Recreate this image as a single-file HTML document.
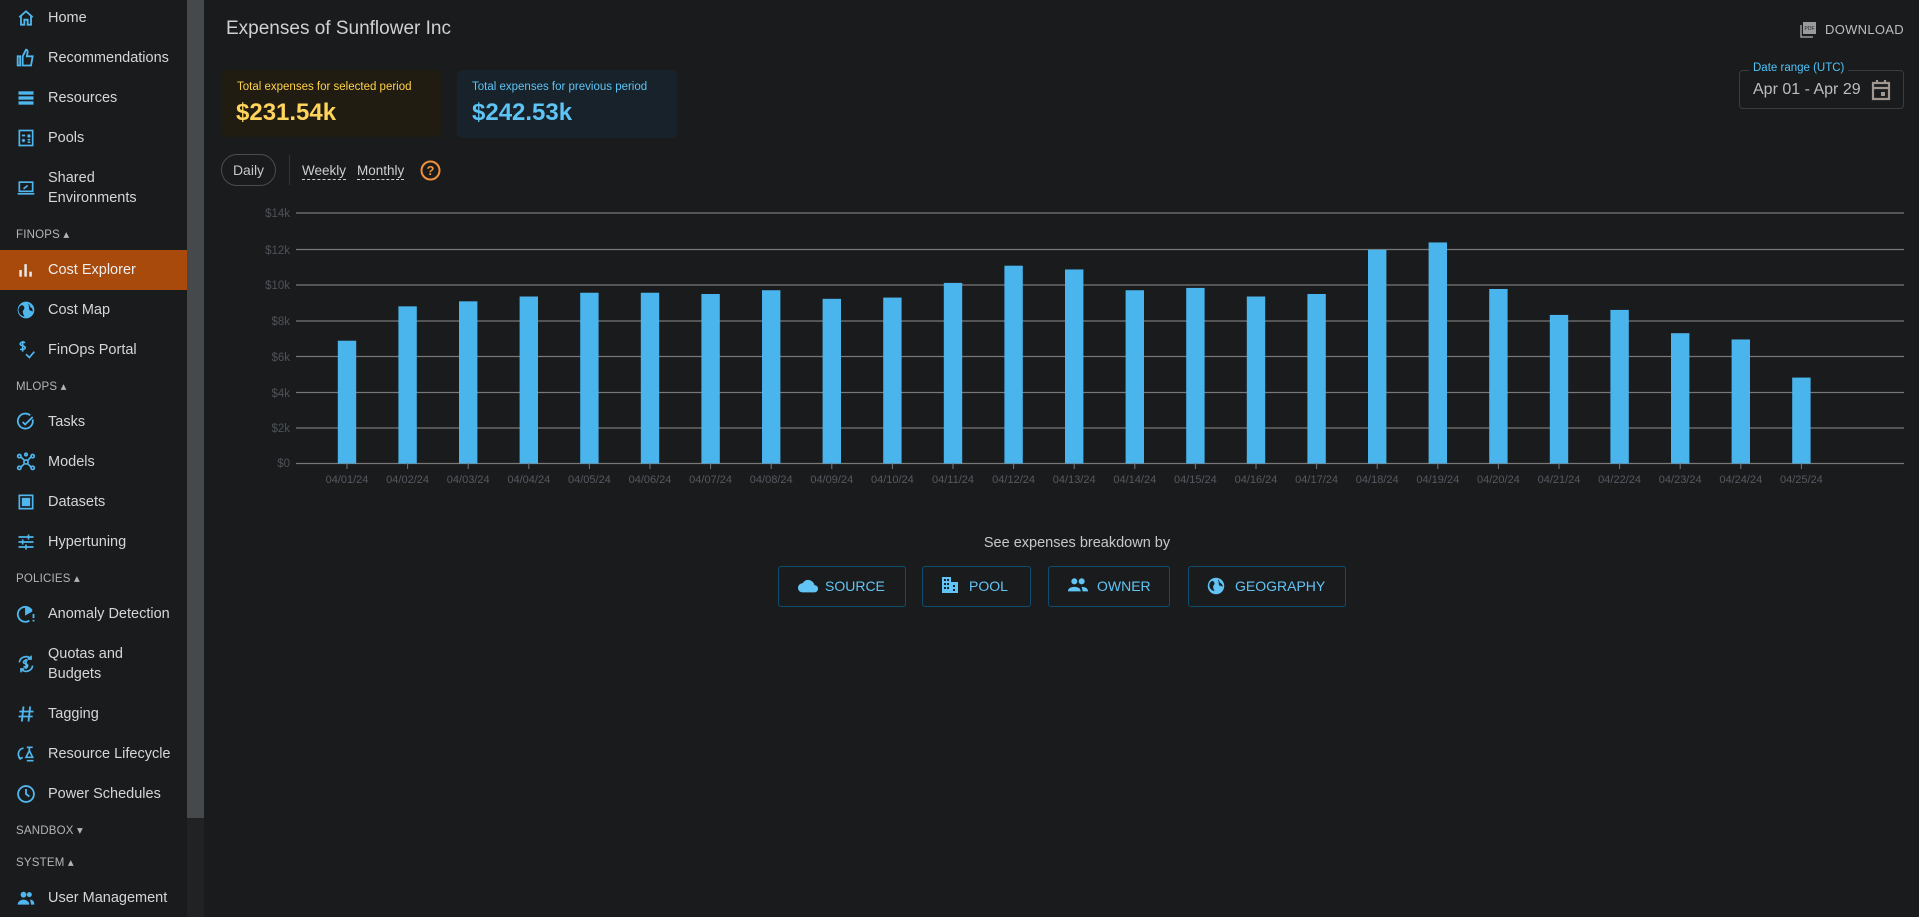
<!DOCTYPE html>
<html><head><meta charset="utf-8">
<style>
*{box-sizing:border-box;margin:0;padding:0}
body{width:1919px;height:917px;background:#1a1b1d;font-family:"Liberation Sans","DejaVu Sans",sans-serif;color:#d4d4d4;position:relative;overflow:hidden}
.sb{position:absolute;left:0;top:0;width:187px;height:917px;background:#1a1b1d}
.scr{position:absolute;left:187px;top:0;width:17px;height:818px;background:#45494c}
.scr2{position:absolute;left:187px;top:818px;width:17px;height:99px;background:#202224}
.it{position:absolute;left:0;width:187px;font-size:14.5px;color:#d6d6d6;line-height:20px}
.it svg{position:absolute;left:16px;width:20px;height:20px}
.it span{position:absolute;left:48px}
.sec{position:absolute;left:16px;font-size:11.5px;color:#b5b5b5;letter-spacing:.2px}
.abs{position:absolute}
</style></head><body>
<div class="sb">
<div class="it" style="top:8px"><svg viewBox="0 0 24 24" style="top:0" fill="none" stroke="#4fb6ee" stroke-width="2.2"><path d="M4 11L12 4l8 7M6 10v10h4v-6h4v6h4V10"/></svg><span>Home</span></div>
<div class="it" style="top:48px"><svg viewBox="0 0 24 24" style="top:0" fill="none" stroke="#4fb6ee" stroke-width="2.2"><path d="M2 10h3v11H2zM8 10l4-8c2 0 2 2 2 3l-1 5h7l-2 11H8z"/></svg><span>Recommendations</span></div>
<div class="it" style="top:88px"><svg viewBox="0 0 24 24" style="top:0" fill="#4fb6ee"><rect x="3" y="4" width="18" height="4"/><rect x="3" y="10" width="18" height="4"/><rect x="3" y="16" width="18" height="4"/></svg><span>Resources</span></div>
<div class="it" style="top:128px"><svg viewBox="0 0 24 24" style="top:0" fill="none" stroke="#4fb6ee" stroke-width="2"><rect x="4" y="3" width="16" height="18"/><path d="M7 9h4M9 13v4M7 15h4M14 8l3 3M17 8l-3 3M14 14h3M14 17h3"/></svg><span>Pools</span></div>
<div class="it" style="top:168px"><svg viewBox="0 0 24 24" style="top:10px" fill="none" stroke="#4fb6ee" stroke-width="2"><rect x="4" y="5" width="16" height="11"/><path d="M2 19h20M9 13l5-4"/></svg><span>Shared<br>Environments</span></div>
<div class="sec" style="top:227px">FINOPS ▴</div>
<div class="abs" style="left:0;top:250px;width:187px;height:40px;background:#a84a0c"></div>
<div class="it" style="top:260px"><svg viewBox="0 0 24 24" style="top:0" fill="#e8e8e8"><rect x="4" y="12" width="3" height="8"/><rect x="10" y="5" width="3" height="15"/><rect x="16" y="14" width="3" height="6"/></svg><span style="color:#eee">Cost Explorer</span></div>
<div class="it" style="top:300px"><svg viewBox="0 0 24 24" style="top:0" fill="#4fb6ee"><circle cx="12" cy="12" r="10"/><path d="M7 6c3 1 4 4 2 6s0 5 1 8c-4-1-7-4-7-8 0-3 2-5 4-6zM15 4c2 2 1 4 3 5s2 3 2 5l-4-2z" fill="#1a1b1d"/></svg><span>Cost Map</span></div>
<div class="it" style="top:340px"><svg viewBox="0 0 24 24" style="top:0" fill="none" stroke="#4fb6ee" stroke-width="2"><path d="M11 3c-3-1-6 0-6 2s6 2 6 4-3 3-6 2M8 1v13M12 17l4 4 6-7"/></svg><span>FinOps Portal</span></div>
<div class="sec" style="top:379px">MLOPS ▴</div>
<div class="it" style="top:412px"><svg viewBox="0 0 24 24" style="top:0" fill="none" stroke="#4fb6ee" stroke-width="2.2"><path d="M20 9a9 9 0 1 1-3-5"/><path d="M8 12l3 3 9-9"/></svg><span>Tasks</span></div>
<div class="it" style="top:452px"><svg viewBox="0 0 24 24" style="top:0" fill="none" stroke="#4fb6ee" stroke-width="2"><circle cx="12" cy="12" r="2.5"/><circle cx="4" cy="5" r="2"/><circle cx="20" cy="5" r="2"/><circle cx="4" cy="19" r="2"/><circle cx="20" cy="19" r="2"/><circle cx="12" cy="3" r="1.5"/><path d="M6 6l4 4M18 6l-4 4M6 18l4-4M18 18l-4-4"/></svg><span>Models</span></div>
<div class="it" style="top:492px"><svg viewBox="0 0 24 24" style="top:0" fill="none" stroke="#4fb6ee" stroke-width="2"><rect x="4" y="4" width="16" height="16"/><rect x="8" y="8" width="3" height="3" fill="#4fb6ee"/><rect x="13" y="8" width="3" height="3" fill="#4fb6ee"/><rect x="8" y="13" width="3" height="3" fill="#4fb6ee"/><rect x="13" y="13" width="3" height="3" fill="#4fb6ee"/></svg><span>Datasets</span></div>
<div class="it" style="top:532px"><svg viewBox="0 0 24 24" style="top:0" fill="none" stroke="#4fb6ee" stroke-width="2"><path d="M3 6h18M3 12h18M3 18h18M15 3v6M8 9v6M12 15v6"/></svg><span>Hypertuning</span></div>
<div class="sec" style="top:571px">POLICIES ▴</div>
<div class="it" style="top:604px"><svg viewBox="0 0 24 24" style="top:0" fill="none" stroke="#4fb6ee" stroke-width="2.2"><path d="M16 20a9 9 0 1 1 3-12"/><path d="M12 3v9l7-4" fill="#4fb6ee"/><path d="M21 12v5M21 19v2"/></svg><span>Anomaly Detection</span></div>
<div class="it" style="top:644px"><svg viewBox="0 0 24 24" style="top:10px" fill="none" stroke="#4fb6ee" stroke-width="2"><path d="M4 10a8 8 0 0 1 14-4M20 14a8 8 0 0 1-14 4M18 2v4h-4M6 22v-4h4M14 8c-2-1-5 0-5 2s5 1 5 4-3 2-5 1M12 6v12"/></svg><span>Quotas and<br>Budgets</span></div>
<div class="it" style="top:704px"><svg viewBox="0 0 24 24" style="top:0" fill="none" stroke="#4fb6ee" stroke-width="2.2"><path d="M9 3L7 21M17 3l-2 18M4 9h17M3 15h17"/></svg><span>Tagging</span></div>
<div class="it" style="top:744px"><svg viewBox="0 0 24 24" style="top:0" fill="none" stroke="#4fb6ee" stroke-width="2"><path d="M9 5a7 7 0 0 0-4 12M3 15l2 3 3-2M13 4h7M16 4v4l-4 8h8l-4-8M13 20h8"/></svg><span>Resource Lifecycle</span></div>
<div class="it" style="top:784px"><svg viewBox="0 0 24 24" style="top:0" fill="none" stroke="#4fb6ee" stroke-width="2.2"><circle cx="12" cy="12" r="9.5"/><path d="M12 6v6l4 3"/></svg><span>Power Schedules</span></div>
<div class="sec" style="top:823px">SANDBOX ▾</div>
<div class="sec" style="top:855px">SYSTEM ▴</div>
<div class="it" style="top:888px"><svg viewBox="0 0 24 24" style="top:0" fill="#4fb6ee"><circle cx="9" cy="8" r="3.5"/><circle cx="16" cy="8" r="3"/><path d="M2 20c0-4 4-6 7-6s7 2 7 6zM17 14c3 0 5 2 5 6h-4c0-2-1-4-1-6z"/></svg><span>User Management</span></div>
</div>
<div class="scr"></div><div class="scr2"></div>

<div class="abs" style="left:226px;top:18px;font-size:19px;color:#d0d0d0">Expenses of Sunflower Inc</div>
<div class="abs" style="left:1800px;top:22px"><svg width="16" height="16" viewBox="0 0 16 16"><rect x="3" y="0" width="13" height="12" fill="#9a9a9a"/><path d="M1 3v12h12" stroke="#9a9a9a" stroke-width="1.5" fill="none"/><text x="4.5" y="8" font-size="5" fill="#222" font-family="Liberation Sans">PDF</text></svg></div>
<div class="abs" style="left:1825px;top:22px;font-size:13px;color:#bdbdbd;letter-spacing:.3px">DOWNLOAD</div>

<div class="abs" style="left:222px;top:70px;width:219px;height:67px;background:#211c12;border-radius:4px"></div>
<div class="abs" style="left:237px;top:81px;font-size:11.5px;color:#ffd24a">Total expenses for selected period</div>
<div class="abs" style="left:236px;top:99px;font-size:24px;font-weight:bold;color:#ffd45c">$231.54k</div>
<div class="abs" style="left:457px;top:70px;width:220px;height:68px;background:#17222a;border-radius:4px"></div>
<div class="abs" style="left:472px;top:81px;font-size:11.5px;color:#5ec4f5">Total expenses for previous period</div>
<div class="abs" style="left:472px;top:99px;font-size:24px;font-weight:bold;color:#5ec4f5">$242.53k</div>

<div class="abs" style="left:1739px;top:70px;width:165px;height:39px;border:1px solid #3a3c3f;border-radius:4px"></div>
<div class="abs" style="left:1749px;top:62px;padding:0 4px;background:#1a1b1d;font-size:11.5px;color:#4fc3f7">Date range (UTC)</div>
<div class="abs" style="left:1753px;top:81px;font-size:16px;color:#bdbdbd">Apr 01 - Apr 29</div>
<svg class="abs" style="left:1871px;top:79px" width="20" height="22" viewBox="0 0 20 22"><path d="M2 4h16v16H2z M2 9h16" fill="none" stroke="#a09890" stroke-width="2.2"/><path d="M6 1v4M14 1v4" stroke="#a09890" stroke-width="2.2"/><rect x="10" y="13" width="4" height="4" fill="#a09890"/></svg>

<div class="abs" style="left:221px;top:154px;width:55px;height:32px;border:1px solid #4a4c4f;border-radius:16px;font-size:14px;color:#c8c8c8;text-align:center;line-height:30px">Daily</div>
<div class="abs" style="left:289px;top:155px;width:1px;height:30px;background:#333"></div>
<div class="abs" style="left:302px;top:162px;font-size:13.5px;color:#cfcfcf;border-bottom:1px dashed #cfcfcf;line-height:17px">Weekly</div>
<div class="abs" style="left:357px;top:162px;font-size:13.5px;color:#cfcfcf;border-bottom:1px dashed #cfcfcf;line-height:17px">Monthly</div>
<svg class="abs" style="left:420px;top:160px" width="21" height="21" viewBox="0 0 21 21"><circle cx="10.5" cy="10.5" r="9" fill="none" stroke="#f0903a" stroke-width="2"/><text x="10.5" y="15" text-anchor="middle" font-size="13" font-weight="bold" fill="#f0903a" font-family="Liberation Sans">?</text></svg>

<svg class="abs" style="left:0;top:0" width="1919" height="500">
<g font-family="Liberation Sans" font-size="11.5" fill="#4d5257" text-anchor="end">
<text x="290" y="217">$14k</text><text x="290" y="254">$12k</text><text x="290" y="289">$10k</text><text x="290" y="325">$8k</text><text x="290" y="361">$6k</text><text x="290" y="397">$4k</text><text x="290" y="432">$2k</text><text x="290" y="467">$0</text>
</g>
<g stroke="#777" stroke-width="1.3">
<line x1="296" x2="1904" y1="213" y2="213"/><line x1="296" x2="1904" y1="249.5" y2="249.5"/><line x1="296" x2="1904" y1="285" y2="285"/><line x1="296" x2="1904" y1="321" y2="321"/><line x1="296" x2="1904" y1="356.5" y2="356.5"/><line x1="296" x2="1904" y1="392.5" y2="392.5"/><line x1="296" x2="1904" y1="428" y2="428"/><line x1="296" x2="1904" y1="463.5" y2="463.5"/>
</g>
<g id="bars" fill="#4ab4ec"></g>
<g id="lbl" font-family="Liberation Sans" font-size="11" fill="#555a60" text-anchor="middle"></g>
<g id="tk" stroke="#777"></g>
</svg>
<script>
var v=[6.86,8.78,9.06,9.33,9.54,9.54,9.47,9.68,9.2,9.27,10.09,11.05,10.84,9.68,9.81,9.33,9.47,11.94,12.35,9.75,8.3,8.58,7.28,6.93,4.8];
var b='',l='',t='';
for(var i=0;i<25;i++){var cx=347+i*60.6,h=v[i]*17.9;
b+='<rect x="'+(cx-9.2)+'" y="'+(463.5-h)+'" width="18.4" height="'+h+'"/>';
var d=(i+1<10?'0':'')+(i+1);
l+='<text x="'+cx+'" y="483">04/'+d+'/24</text>';
t+='<line x1="'+cx+'" x2="'+cx+'" y1="463" y2="469"/>';}
document.getElementById('bars').innerHTML=b;document.getElementById('lbl').innerHTML=l;document.getElementById('tk').innerHTML=t;
</script>

<div class="abs" style="left:0;width:2154px;top:535px;text-align:center;font-size:14.5px;color:#c8c8c8">See expenses breakdown by</div>
<div class="abs" style="left:778px;top:566px;width:128px;height:41px;border:1px solid #0d4d70;border-radius:3px;color:#62c4f5;font-size:14px;line-height:39px;padding-left:18px"><svg width="22" height="16" viewBox="0 0 24 16" style="vertical-align:-3px;margin-right:6px"><path d="M6 15a5 5 0 0 1 0-10 7 7 0 0 1 13 2 4 4 0 0 1 0 8z" fill="#62c4f5"/></svg>SOURCE</div>
<div class="abs" style="left:922px;top:566px;width:109px;height:41px;border:1px solid #0d4d70;border-radius:3px;color:#62c4f5;font-size:14px;line-height:39px;padding-left:18px"><svg width="18" height="18" viewBox="0 0 18 18" style="vertical-align:-3px;margin-right:10px"><path d="M1 1h9v16H1zM10 6h7v11h-7z" fill="#62c4f5"/><g fill="#17222a"><rect x="3" y="3" width="2" height="2"/><rect x="6" y="3" width="2" height="2"/><rect x="3" y="7" width="2" height="2"/><rect x="6" y="7" width="2" height="2"/><rect x="3" y="11" width="2" height="2"/><rect x="6" y="11" width="2" height="2"/><rect x="12" y="9" width="2" height="2"/><rect x="12" y="13" width="2" height="2"/></g></svg>POOL</div>
<div class="abs" style="left:1048px;top:566px;width:122px;height:41px;border:1px solid #0d4d70;border-radius:3px;color:#62c4f5;font-size:14px;line-height:39px;padding-left:18px"><svg width="22" height="16" viewBox="0 0 24 16" style="vertical-align:-2px;margin-right:8px"><circle cx="8" cy="4" r="3.3" fill="#62c4f5"/><circle cx="16" cy="4" r="3.3" fill="#62c4f5"/><path d="M1 15c0-4 4-5 7-5s7 1 7 5zM16 10c3 0 7 1 7 5h-6c0-2-1-4-1-5z" fill="#62c4f5"/></svg>OWNER</div>
<div class="abs" style="left:1188px;top:566px;width:158px;height:41px;border:1px solid #0d4d70;border-radius:3px;color:#62c4f5;font-size:14px;line-height:39px;padding-left:18px"><svg width="18" height="18" viewBox="0 0 24 24" style="vertical-align:-4px;margin-right:10px"><circle cx="12" cy="12" r="11" fill="#62c4f5"/><path d="M7 5c3 1 4 4 2 6s0 5 1 8c-4-1-7-4-7-8 0-3 2-5 4-6zM15 3c2 2 1 4 3 5s3 3 3 5l-5-2z" fill="#17222a"/></svg>GEOGRAPHY</div>
</body></html>
